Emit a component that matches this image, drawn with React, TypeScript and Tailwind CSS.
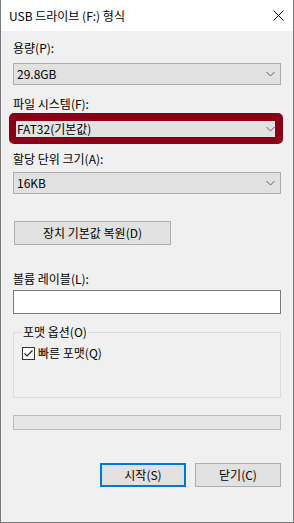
import React from "react";

const font = { fontFamily: '"Noto Sans CJK KR", "Noto Sans", sans-serif' };

function Chevron() {
  return (
    <svg width="9" height="6" viewBox="0 0 9 6" className="shrink-0">
      <path d="M0.5 1 L4.5 5 L8.5 1" fill="none" stroke="#606060" strokeWidth="1" />
    </svg>
  );
}

function Combo({ value }: { value: string }) {
  return (
    <div className="flex h-[22px] w-[268px] items-center justify-between border border-[#adadad] bg-[#e1e1e1] pl-[3px] pr-[5px]">
      <span className="text-[12px] leading-[16px] text-black">{value}</span>
      <Chevron />
    </div>
  );
}

export default function App() {
  return (
    <div
      style={font}
      className="flex h-[523px] w-[294px] flex-col border-x border-b border-[#7a7a7a] bg-[#f0f0f0] text-[12px] leading-[16px] text-black"
    >
      <div className="flex h-[31px] shrink-0 items-center justify-between bg-white pl-[8px] pr-[9px]">
        <span className="text-[12px]">USB 드라이브 (F:) 형식</span>
        <svg width="11" height="11" viewBox="0 0 11 11">
          <path d="M0.5 0.5 L10.5 10.5 M10.5 0.5 L0.5 10.5" stroke="#000" strokeWidth="1" />
        </svg>
      </div>

      <div className="flex flex-col pl-[12px]">
        <div className="mt-[9px] h-[16px]">용량(P):</div>
        <div className="mt-[7px]">
          <Combo value="29.8GB" />
        </div>

        <div className="mt-[11px] h-[16px]">파일 시스템(F):</div>
        <div className="-ml-[4px] mt-[1px] h-[31px] w-[274px] rounded-[5px] border-[#8b0017] border-t-[8px] border-b-[7px] border-l-[7px] border-r-[8px]">
          <div className="flex h-full items-center justify-between bg-[#e3e3e3] pl-[1px] pr-[0px]">
            <span className="text-[12px] leading-[16px]">FAT32(기본값)</span>
            <Chevron />
          </div>
        </div>

        <div className="mt-[7px] h-[16px]">할당 단위 크기(A):</div>
        <div className="mt-[5px]">
          <Combo value="16KB" />
        </div>

        <button className="ml-[1px] mt-[27px] flex h-[24px] w-[157px] items-center justify-center border border-[#adadad] bg-[#e1e1e1] text-[12px] leading-[16px]">
          장치 기본값 복원(D)
        </button>

        <div className="mt-[26px] h-[16px]">볼륨 레이블(L):</div>
        <div className="mt-[3px] h-[24px] w-[268px] border border-[#7a7a7a] bg-white" />

        <div className="mt-[18px] flex h-[66px] w-[268px] flex-col border border-[#dcdcdc] pl-[8px]">
          <span className="-mt-[9px] h-[16px] w-fit bg-[#f0f0f0] px-[1px]">포맷 옵션(O)</span>
          <div className="mt-[5px] flex items-center gap-[3px]">
            <div className="flex h-[13px] w-[13px] items-center justify-center border border-[#333] bg-white">
              <svg width="11" height="11" viewBox="0 0 11 11">
                <path d="M1.5 5.5 L4 8 L9.5 2.5" fill="none" stroke="#222" strokeWidth="1.2" />
              </svg>
            </div>
            <span>빠른 포맷(Q)</span>
          </div>
        </div>

        <div className="mt-[17px] h-[15px] w-[268px] border border-[#bcbcbc] bg-[#e6e6e6]" />

        <div className="mt-[33px] flex w-[268px] justify-end gap-[9px]">
          <button className="flex h-[24px] w-[86px] items-center justify-center border-2 border-[#0078d7] bg-[#e1e1e1] text-[12px] leading-[16px]">
            시작(S)
          </button>
          <button className="flex h-[24px] w-[86px] items-center justify-center border border-[#adadad] bg-[#e1e1e1] text-[12px] leading-[16px]">
            닫기(C)
          </button>
        </div>
      </div>
    </div>
  );
}
